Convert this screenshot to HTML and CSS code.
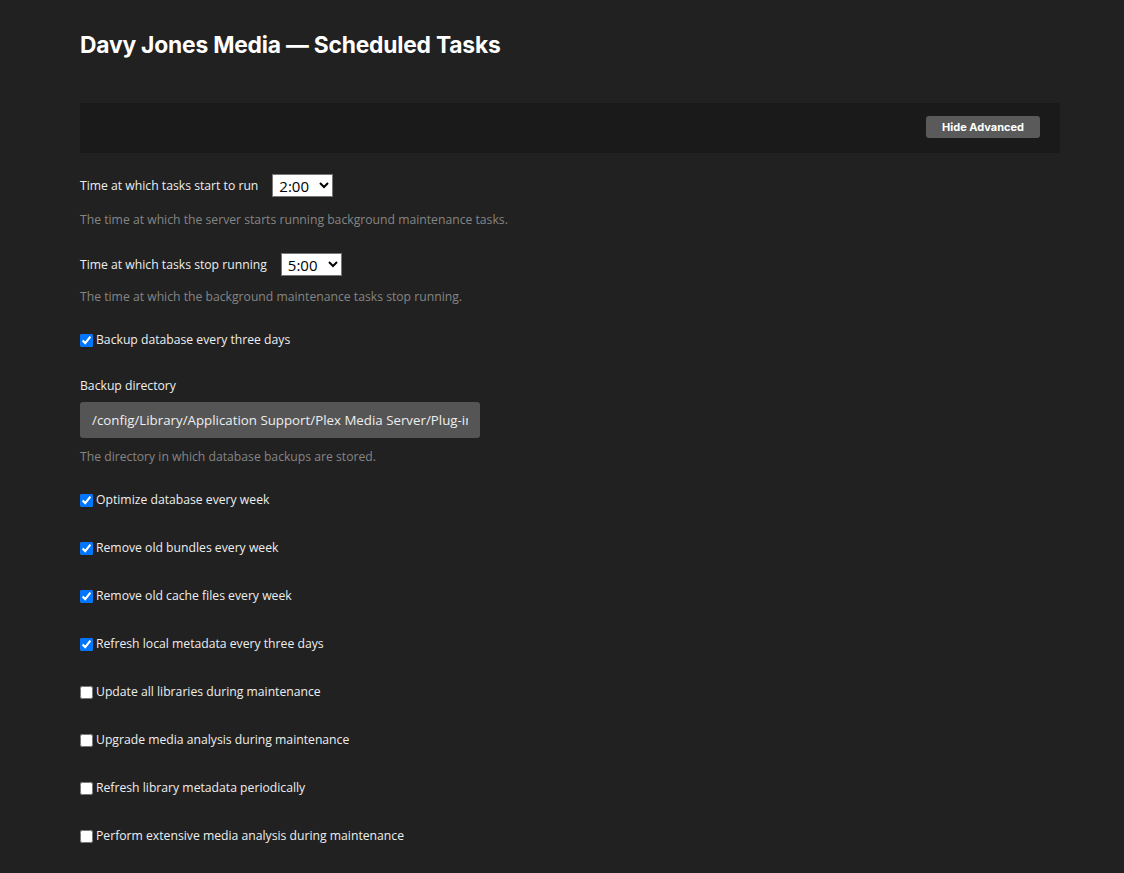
FILE: index.html
```html
<!DOCTYPE html>
<html lang="en">
<head>
<meta charset="utf-8">
<title>Scheduled Tasks</title>
<link rel="stylesheet" href="styles.css">
</head>
<body>
<div class="page">
  <h1 class="title">Davy Jones Media — Scheduled Tasks</h1>
  <div class="toolbar">
    <button class="btn" type="button">Hide Advanced</button>
  </div>

  <div class="group">
    <div class="row">
      <label class="label" for="start">Time at which tasks start to run</label>
      <select id="start" class="sel"><option>2:00</option></select>
    </div>
    <p class="help">The time at which the server starts running background maintenance tasks.</p>
  </div>

  <div class="group second">
    <div class="row">
      <label class="label" for="stop">Time at which tasks stop running</label>
      <select id="stop" class="sel"><option>5:00</option></select>
    </div>
    <p class="help">The time at which the background maintenance tasks stop running.</p>
  </div>

  <label class="check first"><input type="checkbox" checked><span>Backup database every three days</span></label>

  <div class="group dir">
    <div class="label">Backup directory</div>
    <input class="text" type="text" value="/config/Library/Application Support/Plex Media Server/Plug-ins">
    <p class="help">The directory in which database backups are stored.</p>
  </div>

  <label class="check"><input type="checkbox" checked><span>Optimize database every week</span></label>
  <label class="check"><input type="checkbox" checked><span>Remove old bundles every week</span></label>
  <label class="check"><input type="checkbox" checked><span>Remove old cache files every week</span></label>
  <label class="check"><input type="checkbox" checked><span>Refresh local metadata every three days</span></label>
  <label class="check"><input type="checkbox"><span>Update all libraries during maintenance</span></label>
  <label class="check"><input type="checkbox"><span>Upgrade media analysis during maintenance</span></label>
  <label class="check"><input type="checkbox"><span>Refresh library metadata periodically</span></label>
  <label class="check"><input type="checkbox"><span>Perform extensive media analysis during maintenance</span></label>
</div>
</body>
</html>
```

FILE: styles.css
```css
html, body {
  margin: 0;
  padding: 0;
  background: #212121;
  height: 100%;
  overflow: hidden;
}
body {
  font-family: "Open Sans", "Noto Sans", "Liberation Sans", sans-serif;
  color: #eeeeee;
  font-size: 12.2px;
}
.page {
  padding: 30px 64px 0 80px;
  display: flex;
  flex-direction: column;
  align-items: flex-start;
}
.title {
  margin: 0;
  font-family: "Inter", "Lato", sans-serif;
  font-weight: 700;
  font-size: 22.8px;
  line-height: 30px;
  color: #ffffff;
  letter-spacing: -0.2px;
}
.toolbar {
  margin-top: 43px;
  align-self: stretch;
  height: 50px;
  background: #1a1a1a;
  display: flex;
  align-items: center;
  justify-content: flex-end;
  padding-right: 20px;
  box-sizing: border-box;
}
.btn {
  height: 22px;
  width: 114px;
  margin-top: -2px;
  background: #5a5a5a;
  color: #ffffff;
  border: 0;
  border-radius: 3px;
  font-family: "Inter", "Lato", sans-serif;
  font-weight: 700;
  font-size: 11px;
  padding: 0;
}
.group {
  display: flex;
  flex-direction: column;
  align-items: flex-start;
}
.row {
  display: flex;
  align-items: flex-start;
  gap: 14px;
  margin-top: 21px;
  height: 23px;
}
.row .label {
  padding-top: 3px;
}
.second .row {
  margin-top: 22px;
}
.label {
  font-size: 12.2px;
  line-height: 18px;
  color: #eeeeee;
}
.sel {
  width: 61px;
  height: 23px;
  font-family: "Open Sans", "Noto Sans", sans-serif;
  font-size: 15px;
  background: #ffffff;
  color: #000000;
  border: 1px solid #767676;
  border-radius: 0;
  padding: 0 2px;
}
.help {
  margin: 12px 0 0 0;
  font-size: 12.2px;
  line-height: 22px;
  color: #858585;
}
.second .help {
  margin-top: 10px;
}
.check {
  display: flex;
  align-items: center;
  height: 18px;
  margin-top: 30px;
  line-height: 18px;
  font-size: 12.2px;
}
.check.first {
  margin-top: 23px;
}
.check input {
  margin: 0 3px 0 0;
  width: 13px;
  height: 13px;
}
.dir {
  margin-top: 28px;
}
.dir .label {
  margin-bottom: 7px;
}
.text {
  width: 400px;
  height: 36px;
  box-sizing: border-box;
  background: #555555;
  border: 0;
  border-radius: 3px;
  color: #eeeeee;
  font-family: "Open Sans", "Noto Sans", sans-serif;
  font-size: 13.3px;
  padding: 0 12px;
}
.dir .help {
  margin-top: 8px;
}
.dir + .check {
  margin-top: 23px;
}
```
